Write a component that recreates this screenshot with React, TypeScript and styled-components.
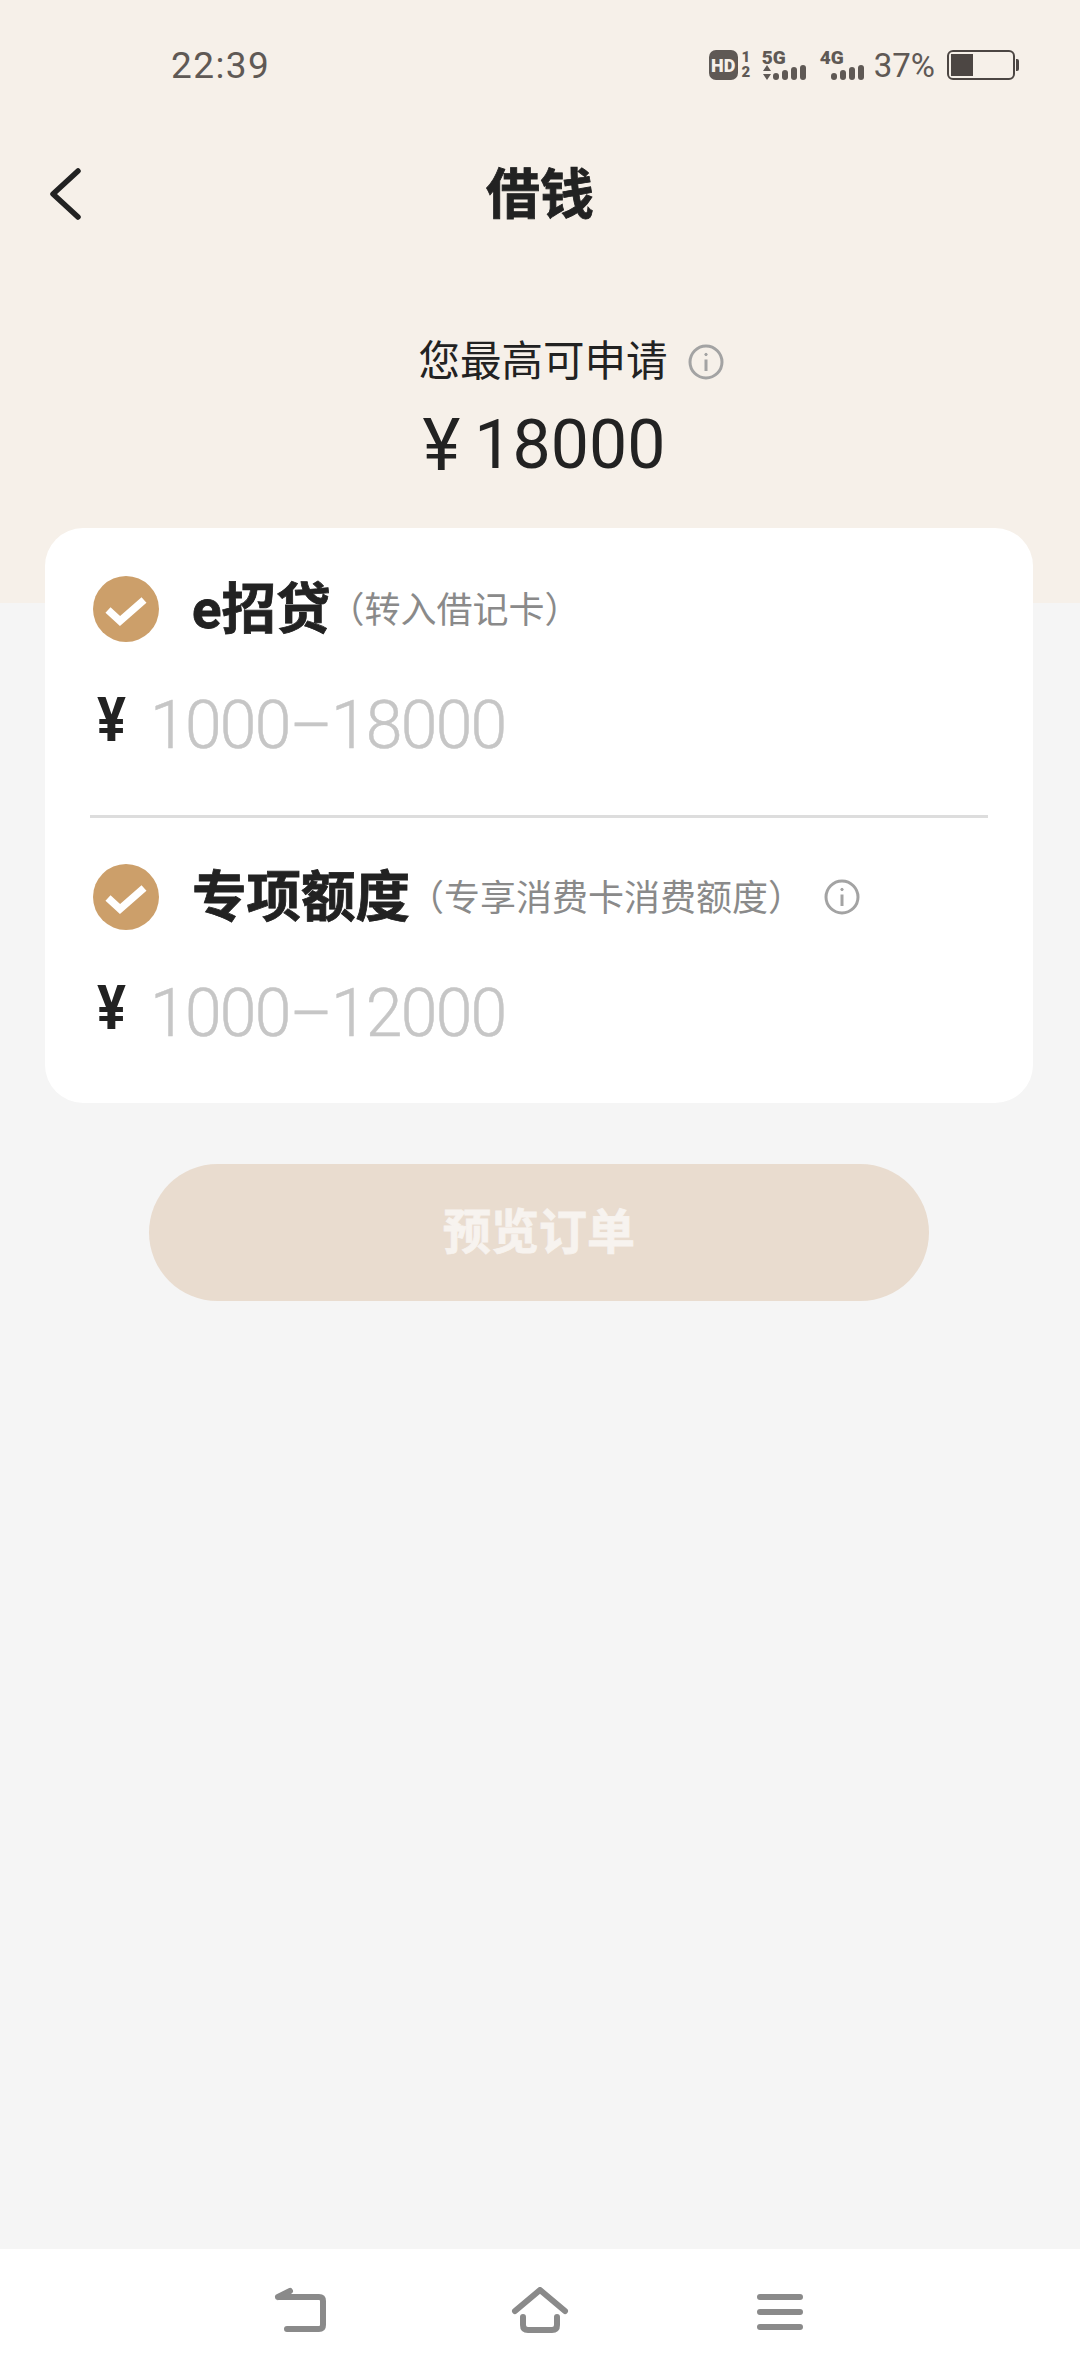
import React from 'react'
import styled, { createGlobalStyle } from 'styled-components'

const fontStack = `Roboto, "Noto Sans CJK SC", sans-serif`

const GlobalStyle = createGlobalStyle`
  html, body {
    margin: 0;
    padding: 0;
    background: #f5f5f5;
  }
  * {
    box-sizing: border-box;
  }
`

const Page = styled.div`
  display: flex;
  flex-direction: column;
  width: 1080px;
  height: 2376px;
  overflow: hidden;
  background: #f5f5f5;
  font-family: ${fontStack};
  color: #222;
`

const Hero = styled.header`
  height: 603px;
  background: #f6f0e9;
`

const StatusBar = styled.div`
  display: flex;
  align-items: center;
  justify-content: space-between;
  height: 130px;
  padding: 0 61px 0 171px;
  color: #5f5955;
`

const Clock = styled.span`
  font-size: 37px;
  letter-spacing: 1.4px;
`

const StatusIcons = styled.div`
  display: flex;
  align-items: center;
`

const HdBadge = styled.span`
  display: flex;
  align-items: center;
  justify-content: center;
  width: 29px;
  height: 30px;
  border-radius: 7px;
  background: #5f5955;
  color: #f6f0e9;
  font-size: 18px;
  font-weight: 900;
`

const SimSlots = styled.span`
  display: flex;
  flex-direction: column;
  width: 10px;
  margin: 0 11px 0 3px;
  font-size: 15px;
  font-weight: 900;
  line-height: 15px;
  text-align: center;
`

const Signal = styled.span<{ $gap: number }>`
  display: flex;
  flex-direction: column;
  width: 46px;
  height: 30px;
  margin-right: ${p => p.$gap}px;
`

const SignalName = styled.span`
  font-size: 19px;
  font-weight: 900;
  line-height: 15px;
`

const SignalBars = styled.svg`
  display: block;
  width: 46px;
  height: 15px;
  fill: #5f5955;
`

const BatteryPercent = styled.span`
  margin-right: 12px;
  font-size: 33px;
  font-weight: 400;
`

const Battery = styled.span`
  display: block;
  width: 68px;
  height: 30px;
  padding: 2px;
  border: 2px solid #4c4643;
  border-radius: 6px;
`

const BatteryLevel = styled.span`
  display: block;
  height: 100%;
  background: #4c4643;
`

const BatteryCap = styled.span`
  width: 3px;
  height: 12px;
  margin-left: 1px;
  border-radius: 0 2px 2px 0;
  background: #4c4643;
`

const TitleBar = styled.div`
  display: grid;
  grid-template-columns: 1fr auto 1fr;
  align-items: center;
  height: 128px;
  padding: 0 48px;
`

const BackIcon = styled.svg`
  display: block;
  width: 34px;
  height: 52px;
  fill: none;
  stroke: #222;
  stroke-width: 5.5;
  stroke-linecap: round;
  stroke-linejoin: round;
`

const Title = styled.h1`
  margin: 3px 0 0;
  font-size: 54px;
  font-weight: 700;
  line-height: 1;
  -webkit-text-stroke: 0.8px #222;
`

const Summary = styled.section`
  display: flex;
  flex-direction: column;
  align-items: center;
  padding-top: 74px;
`

const SummaryLabel = styled.div`
  display: flex;
  align-items: center;
  gap: 20px;
  height: 60px;
  padding-left: 62px;
  font-size: 41.5px;
  line-height: 60px;
`

const SummaryAmount = styled.div`
  display: flex;
  align-items: center;
  gap: 14px;
  height: 84px;
  margin-top: 11px;
  padding-left: 8px;
  font-size: 68px;
  font-weight: 400;
`

const AmountYen = styled.span`
  font-size: 72px;
  font-weight: 400;
`

const InfoSvg = styled.svg`
  display: block;
  width: 36px;
  height: 36px;
  fill: none;
  stroke: #a3a3a3;
  stroke-width: 3;
  flex: none;
`

const Card = styled.section`
  margin: -75px 47px 0 45px;
  padding: 48px 45px 45px;
  border-radius: 38px;
  background: #fff;
`

const QuotaHead = styled.div`
  display: flex;
  align-items: center;
  height: 66px;
  padding-left: 3px;
`

const QuotaTitle = styled.span`
  margin-left: 33px;
  font-size: 54.5px;
  font-weight: 700;
  line-height: 66px;
  white-space: nowrap;
  -webkit-text-stroke: 0.8px #222;
`

const QuotaNote = styled.span`
  margin: -5px 0 0 -2px;
  font-size: 36px;
  color: #8a8a8a;
  white-space: nowrap;
`

const NoteInfo = styled.span`
  margin-left: 20px;
`

const CheckSvg = styled.svg`
  display: block;
  width: 66px;
  height: 66px;
  flex: none;
`

const AmountRow = styled.div`
  display: flex;
  align-items: center;
  height: 90px;
  margin-top: 38px;
  padding-left: 7px;
`

const RowYen = styled.span`
  width: 30px;
  margin-top: -10px;
  font-size: 54px;
  font-weight: 700;
  line-height: 1;
  transform: scaleY(1.14);
`

const Placeholder = styled.span`
  margin-left: 23px;
  font-size: 66px;
  font-weight: 300;
  letter-spacing: -1.7px;
  color: #c6c6c6;
  -webkit-text-stroke: 0.5px #c6c6c6;
`

const Divider = styled.hr`
  height: 3px;
  margin: 45px 0 46px;
  border: 0;
  background: #dddddd;
`

const SubmitButton = styled.button`
  display: block;
  width: 780px;
  height: 137px;
  margin: 61px 0 0 149px;
  padding: 0 0 9px;
  border: 0;
  border-radius: 69px;
  background: #e9dccf;
  color: #f7f3ef;
  font-family: ${fontStack};
  font-size: 48px;
  font-weight: 700;
  -webkit-text-stroke: 0.8px #f7f3ef;
`

const NavBar = styled.nav`
  display: grid;
  grid-template-columns: repeat(3, 60px);
  justify-content: center;
  column-gap: 180px;
  align-items: center;
  height: 127px;
  margin-top: auto;
  padding-bottom: 5px;
  background: #fff;
`

const NavIcon = styled.svg`
  display: block;
  width: 60px;
  height: 46px;
  justify-self: center;
  fill: none;
  stroke: #8a8a8a;
  stroke-width: 6;
  stroke-linecap: round;
  stroke-linejoin: round;
`

const InfoIcon = () => (
  <InfoSvg viewBox="0 0 36 36">
    <circle cx="18" cy="18" r="16" />
    <path d="M18 15.5V27" />
    <circle cx="18" cy="10.5" r="1.2" fill="#a3a3a3" strokeWidth="1" />
  </InfoSvg>
)

const CheckIcon = () => (
  <CheckSvg viewBox="0 0 66 66">
    <circle cx="33" cy="33" r="33" fill="#cc9f6a" />
    <path d="M15 34l12 11 24-21" fill="none" stroke="#fff" strokeWidth="7.5" strokeLinejoin="miter" />
  </CheckSvg>
)

const SignalIcon = ({ name, gap, arrows }: { name: string; gap: number; arrows?: boolean }) => (
  <Signal $gap={gap}>
    <SignalName>{name}</SignalName>
    <SignalBars viewBox="0 0 46 15">
      {arrows && <path d="M5 0l4 6H1zM5 15l4-6H1z" />}
      <rect x="11" y="8" width="6" height="7" rx="3" />
      <rect x="20" y="5" width="6" height="10" rx="3" />
      <rect x="29" y="2" width="6" height="13" rx="3" />
      <rect x="38" y="0" width="6" height="15" rx="3" />
    </SignalBars>
  </Signal>
)

const quotas = [
  { key: 'e', title: 'e招贷', note: '（转入借记卡）', range: '1000–18000', info: false },
  { key: 'special', title: '专项额度', note: '（专享消费卡消费额度）', range: '1000–12000', info: true },
]

export default function App() {
  return (
    <Page>
      <GlobalStyle />
      <Hero>
        <StatusBar>
          <Clock>22:39</Clock>
          <StatusIcons>
            <HdBadge>HD</HdBadge>
            <SimSlots>
              <span>1</span>
              <span>2</span>
            </SimSlots>
            <SignalIcon name="5G" gap={12} arrows />
            <SignalIcon name="4G" gap={8} />
            <BatteryPercent>37%</BatteryPercent>
            <Battery>
              <BatteryLevel style={{ width: '37%' }} />
            </Battery>
            <BatteryCap />
          </StatusIcons>
        </StatusBar>
        <TitleBar>
          <BackIcon viewBox="0 0 34 52">
            <path d="M30 3L5 26l25 23" />
          </BackIcon>
          <Title>借钱</Title>
        </TitleBar>
        <Summary>
          <SummaryLabel>
            您最高可申请
            <InfoIcon />
          </SummaryLabel>
          <SummaryAmount>
            <AmountYen>¥</AmountYen>
            18000
          </SummaryAmount>
        </Summary>
      </Hero>

      <Card>
        {quotas.map((quota, index) => (
          <React.Fragment key={quota.key}>
            {index > 0 && <Divider />}
            <QuotaHead>
              <CheckIcon />
              <QuotaTitle>{quota.title}</QuotaTitle>
              <QuotaNote>{quota.note}</QuotaNote>
              {quota.info && (
                <NoteInfo>
                  <InfoIcon />
                </NoteInfo>
              )}
            </QuotaHead>
            <AmountRow>
              <RowYen>¥</RowYen>
              <Placeholder>{quota.range}</Placeholder>
            </AmountRow>
          </React.Fragment>
        ))}
      </Card>

      <SubmitButton>预览订单</SubmitButton>

      <NavBar>
        <NavIcon viewBox="0 0 60 46">
          <path d="M8 10h41q4 0 4 4v24q0 4-4 4H17M8 10l12-6" />
        </NavIcon>
        <NavIcon viewBox="0 0 60 46">
          <path d="M5 24L30 3l25 21M13 30v8q0 5 5 5h24q5 0 5-5v-8" />
        </NavIcon>
        <NavIcon viewBox="0 0 60 46">
          <path d="M10 10h40M10 25h40M10 40h40" />
        </NavIcon>
      </NavBar>
    </Page>
  )
}
